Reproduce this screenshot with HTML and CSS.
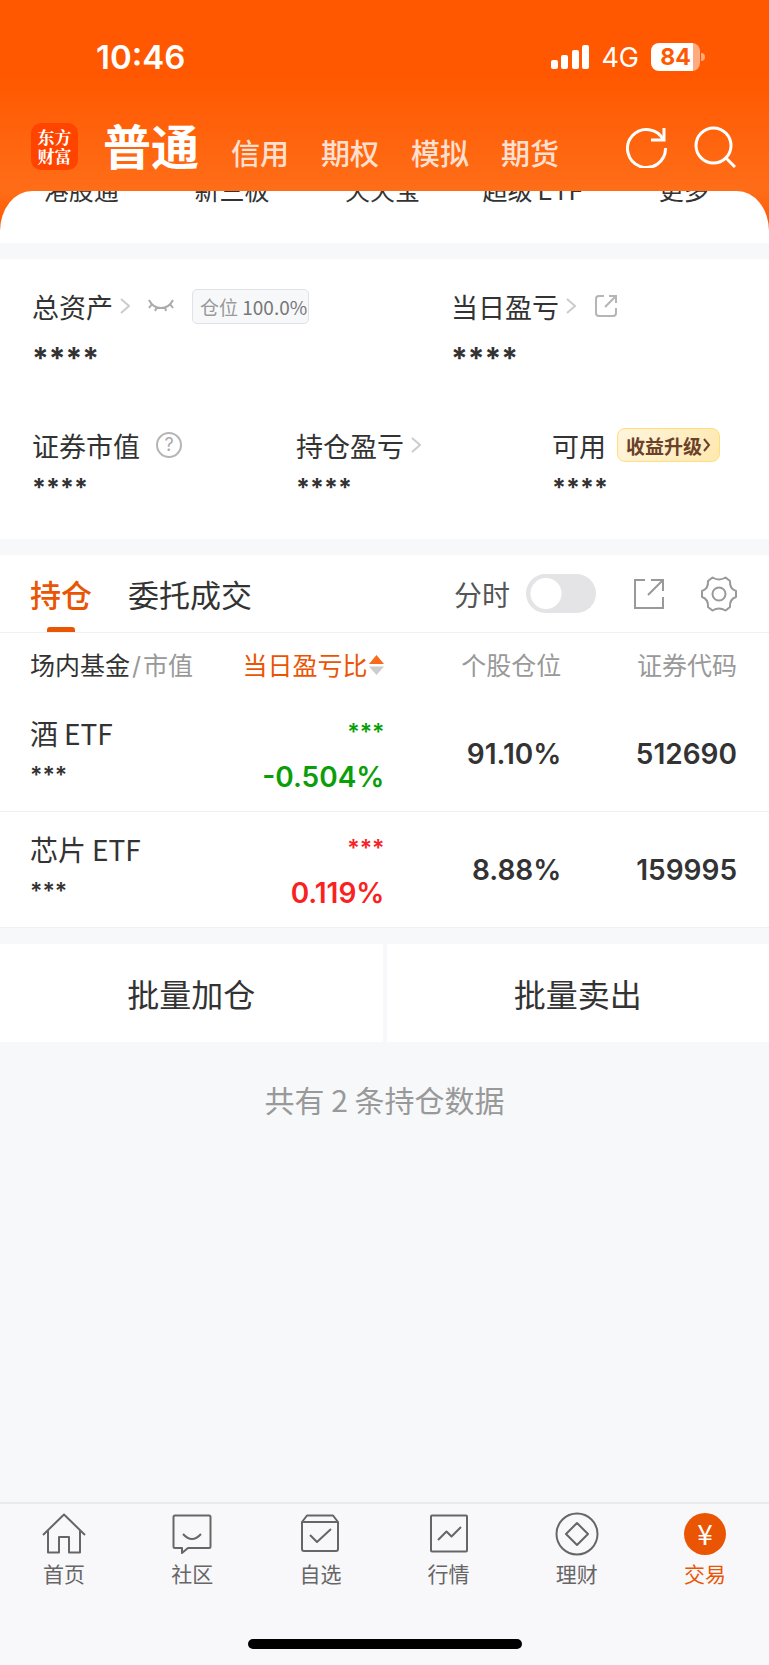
FILE: index.html
```html
<!DOCTYPE html>
<html lang="zh-CN">
<head>
    <meta charset="utf-8">
    <meta name="viewport" content="width=device-width, initial-scale=1">
    <title>交易 - 持仓</title>
    <link rel="stylesheet" href="styles.css">
</head>
<body>

<header class="top">
    <div class="status-bar">
        <span class="clock">10:46</span>
        <div class="status-icons">
            <svg class="signal" width="38" height="25" viewBox="0 0 38 25" fill="#fff">
                <rect x="0" y="15" width="7" height="9" rx="2"/>
                <rect x="10" y="10" width="7" height="14" rx="2"/>
                <rect x="21" y="5" width="7" height="19" rx="2"/>
                <rect x="31" y="0" width="7" height="24" rx="2"/>
            </svg>
            <span class="network">4G</span>
            <span class="battery">84</span>
        </div>
    </div>

    <div class="nav-bar">
        <div class="logo">东方<br>财富</div>
        <nav class="accounts">
            <a href="#" class="active">普通</a>
            <a href="#">信用</a>
            <a href="#">期权</a>
            <a href="#">模拟</a>
            <a href="#">期货</a>
        </nav>
        <div class="nav-actions">
            <button type="button" aria-label="刷新">
                <svg width="42" height="42" viewBox="0 0 42 42" fill="none" stroke="#fff" stroke-width="3">
                    <path d="M40.500 22A19 19 0 1 1 38.500 14"/>
                    <path d="M39 2V14H26"/>
                </svg>
            </button>
            <button type="button" aria-label="搜索">
                <svg width="42" height="42" viewBox="0 0 42 42" fill="none" stroke="#fff" stroke-width="3">
                    <circle cx="19.500" cy="19.500" r="17.500"/>
                    <path d="M32 32L41 41"/>
                </svg>
            </button>
        </div>
    </div>

    <div class="sheet">
        <a href="#">港股通</a>
        <a href="#">新三板</a>
        <a href="#">天天宝</a>
        <a href="#">超级<span>ETF</span></a>
        <a href="#">更多</a>
    </div>
</header>

<section class="assets">
    <div class="asset-row main-row">
        <div>
            <div class="label">
                <span>总资产</span>
                <svg class="chevron" width="10" height="16" viewBox="0 0 10 16"><path d="M1 1L9 8L1 15"/></svg>
                <button type="button" class="eye" aria-label="显示金额">
                    <svg width="26" height="14" viewBox="0 0 26 14" fill="none" stroke="#aaa" stroke-width="2">
                        <path d="M1 1Q5 9 13 9T25 1M4 5L1 9M9 8L7 12M17 8L18 12M22 5L25 9"/>
                    </svg>
                </button>
                <span class="ratio">仓位 <b>100.0%</b></span>
            </div>
            <div class="mask">****</div>
        </div>
        <div>
            <div class="label">
                <span>当日盈亏</span>
                <svg class="chevron" width="10" height="16" viewBox="0 0 10 16"><path d="M1 1L9 8L1 15"/></svg>
                <button type="button" class="share" aria-label="分享">
                    <svg width="24" height="24" viewBox="0 0 24 24" fill="none" stroke="#b5b5b5" stroke-width="2">
                        <path d="M10 2H5Q2 2 2 5V19Q2 22 5 22H19Q22 22 22 19V14M15 2H22V9M22 2L11 13"/>
                    </svg>
                </button>
            </div>
            <div class="mask">****</div>
        </div>
    </div>

    <div class="asset-row sub-row">
        <div>
            <div class="label">
                <span>证券市值</span>
                <button type="button" class="help" aria-label="说明">?</button>
            </div>
            <div class="mask">****</div>
        </div>
        <div>
            <div class="label">
                <span>持仓盈亏</span>
                <svg class="chevron" width="10" height="16" viewBox="0 0 10 16"><path d="M1 1L9 8L1 15"/></svg>
            </div>
            <div class="mask">****</div>
        </div>
        <div>
            <div class="label">
                <span>可用</span>
                <a href="#" class="upgrade">收益升级<svg width="8" height="14" viewBox="0 0 8 14"><path d="M1 1L6 7L1 13"/></svg></a>
            </div>
            <div class="mask">****</div>
        </div>
    </div>
</section>

<section class="holdings">
    <div class="tabs">
        <button type="button" class="tab active">持仓</button>
        <button type="button" class="tab">委托成交</button>
        <label for="minute">分时</label>
        <input type="checkbox" id="minute" class="switch">
        <button type="button" aria-label="分享">
            <svg width="32" height="32" viewBox="0 0 32 32" fill="none" stroke="#999" stroke-width="2">
                <path d="M12 2H2V30H30V19M18 2H30V13M30 2L15 17"/>
            </svg>
        </button>
        <button type="button" class="gear" aria-label="设置">
            <svg width="36" height="36" viewBox="0 0 36 36" fill="none" stroke="#999" stroke-width="2" stroke-linejoin="round">
                <path d="M11.500 1.500Q18 5.500 24.500 1.500L29 5Q28.500 13 35 15V21Q28.500 23 29 31L24.500 34.500Q18 30.500 11.500 34.500L7 31Q7.500 23 1 21V15Q7.500 13 7 5Z"/>
                <circle cx="18" cy="18" r="6.500"/>
            </svg>
        </button>
    </div>

    <table>
        <thead>
            <tr>
                <th class="name">场内基金<span><i>/</i>市值</span></th>
                <th class="sorted">当日盈亏比<svg width="15" height="20" viewBox="0 0 15 20"><path d="M0 9L7.500 0L15 9Z" fill="#f96a1b"/><path d="M0 11.500H15L7.500 20Z" fill="#ccc"/></svg></th>
                <th>个股仓位</th>
                <th class="code">证券代码</th>
            </tr>
        </thead>
        <tbody>
            <tr>
                <td class="name">酒<span>ETF</span><div class="mask">***</div></td>
                <td class="change down"><div class="mask">***</div>-0.504%</td>
                <td>91.10%</td>
                <td class="code">512690</td>
            </tr>
            <tr>
                <td class="name">芯片<span>ETF</span><div class="mask">***</div></td>
                <td class="change up"><div class="mask">***</div>0.119%</td>
                <td>8.88%</td>
                <td class="code">159995</td>
            </tr>
        </tbody>
    </table>
</section>

<div class="batch">
    <button type="button">批量加仓</button>
    <button type="button">批量卖出</button>
</div>

<p class="summary">共有 2 条持仓数据</p>

<footer>
    <nav class="tab-bar">
        <a href="#">
            <svg width="44" height="44" viewBox="0 0 44 44">
                <path d="M1 23L22 2.500L43 23M6 18V40.500H17V25H27V40.500H38V18"/>
            </svg>
            首页
        </a>
        <a href="#">
            <svg width="44" height="44" viewBox="0 0 44 44">
                <path d="M5 3.500H39Q40.500 3.500 40.500 5V34.500Q40.500 36 39 36H18L12 41V36H5Q3.500 36 3.500 34.500V5Q3.500 3.500 5 3.500Z"/>
                <path d="M13 22Q22 32 31 22"/>
            </svg>
            社区
        </a>
        <a href="#">
            <svg width="44" height="44" viewBox="0 0 44 44">
                <path d="M4 10L9 3.500H35L40 10V37Q40 39 38 39H6Q4 39 4 37ZM4 10H40M12 23L19 30L33 17"/>
            </svg>
            自选
        </a>
        <a href="#">
            <svg width="44" height="44" viewBox="0 0 44 44">
                <rect x="4" y="3.500" width="36" height="36" rx="1"/>
                <path d="M11 28L19.500 19.500L24.500 24.500L34 15"/>
            </svg>
            行情
        </a>
        <a href="#">
            <svg width="44" height="44" viewBox="0 0 44 44">
                <circle cx="22" cy="22" r="20.500"/>
                <path d="M22 11L33 22L22 33L11 22Z"/>
            </svg>
            理财
        </a>
        <a href="#" class="active">
            <span class="yen">¥</span>
            交易
        </a>
    </nav>
    <div class="home-indicator"></div>
</footer>

</body>
</html>
```

FILE: styles.css
```css
* {
  box-sizing: border-box;
}

body {
  margin: 0;
  min-height: 100vh;
  display: flex;
  flex-direction: column;
  background-color: #f7f8fa;
  color: #333;
  font-family: Inter, "Noto Sans CJK SC", sans-serif;
  font-size: 27px;
}

a {
  color: inherit;
  text-decoration: none;
}

button {
  display: flex;
  padding: 0;
  border: 0;
  background: none;
  color: inherit;
  font: inherit;
}

svg {
  display: block;
  flex: none;
}

/* header */

.top {
  background: linear-gradient(#ff5800 75px, #ff6d18 190px, #ff5800 230px);
  color: #fff;
}

.status-bar {
  display: flex;
  justify-content: space-between;
  align-items: center;
  height: 114px;
  padding: 0 63px 0 96px;
}

.clock {
  font-size: 33px;
  font-weight: 600;
}

.status-icons {
  display: flex;
  align-items: center;
}

.network {
  margin: 0 12px;
  font-size: 27px;
}

.battery {
  position: relative;
  width: 49px;
  height: 28px;
  margin-right: 6px;
  border-radius: 8px;
  background: linear-gradient(90deg, #fff 42px, #ffab80 42px);
  color: #ff5800;
  font-size: 23px;
  font-weight: 700;
  line-height: 28px;
  text-align: center;
}

.battery::after {
  content: "";
  position: absolute;
  right: -5px;
  top: 10px;
  width: 4px;
  height: 8px;
  border-radius: 0 4px 4px 0;
  background-color: #ffab80;
}

.nav-bar {
  display: flex;
  align-items: center;
  height: 77px;
  padding: 0 33px 12px 31px;
}

.logo {
  width: 47px;
  height: 47px;
  padding-top: 4px;
  border-radius: 10px;
  background-color: #ff4400;
  font-family: "Noto Serif CJK SC", "Noto Sans CJK SC", serif;
  font-size: 17px;
  font-weight: 700;
  line-height: 19px;
  text-align: center;
}

.accounts {
  display: flex;
  align-items: baseline;
  gap: 32px;
  margin-left: 25px;
  padding-top: 9px;
  color: #ffe0d0;
  font-size: 29px;
  font-weight: 500;
  line-height: 64px;
}

.accounts .active {
  color: #fff;
  font-size: 48px;
  font-weight: 700;
}

.nav-actions {
  display: flex;
  gap: 27px;
  margin-left: auto;
}

.sheet {
  display: grid;
  grid-template-columns: repeat(5, 1fr);
  align-items: start;
  height: 52px;
  padding: 0 10px 0 6px;
  overflow: hidden;
  border-radius: 32px 32px 0 0 / 40px 40px 0 0;
  background-color: #fff;
  color: #333;
  font-size: 25px;
  line-height: 36px;
  text-align: center;
}

/* scrolled half way under the header */
.sheet a {
  margin-top: -18px;
}

.sheet span {
  margin-left: 5px;
}

/* assets */

.assets {
  margin: 16px 0;
  padding: 28px 0 27px 32px;
  background-color: #fff;
}

.asset-row {
  display: grid;
}

.main-row {
  grid-template-columns: 419fr 318fr;
  margin-bottom: 41px;
}

.sub-row {
  grid-template-columns: 264fr 256fr 217fr;
}

.label {
  display: flex;
  align-items: center;
  height: 38px;
}

.mask {
  font-weight: 700;
}

.main-row .mask {
  padding-top: 6px;
  font-size: 30px;
  line-height: 54px;
}

.sub-row .mask {
  font-size: 25px;
  line-height: 48px;
}

.chevron {
  margin-left: 7px;
  fill: none;
  stroke: #ccc;
  stroke-width: 2px;
}

.eye {
  margin-left: 18px;
}

.ratio {
  margin-left: 18px;
  padding: 0 1px 0 7px;
  border: 1px solid #e1e2e5;
  border-radius: 5px;
  background-color: #f7f8fa;
  color: #999;
  font-family: "Noto Sans CJK SC", sans-serif;
  font-size: 19px;
  line-height: 33px;
  white-space: nowrap;
}

.ratio b {
  color: #777;
  font-weight: 400;
}

.share {
  margin-left: 18px;
}

.help {
  justify-content: center;
  width: 26px;
  height: 26px;
  margin-left: 16px;
  border: 2px solid #b5b5b5;
  border-radius: 50%;
  color: #aaa;
  font-size: 18px;
  line-height: 22px;
}

.upgrade {
  display: flex;
  align-items: center;
  gap: 1px;
  height: 34px;
  margin-left: 11px;
  padding: 0 8px;
  border: 1px solid #ffe078;
  border-radius: 8px;
  background: linear-gradient(120deg, #fff5de, #ffe8b0);
  color: #6b4128;
  font-size: 19px;
  font-weight: 700;
}

.upgrade svg {
  fill: none;
  stroke: #6b4128;
  stroke-width: 2px;
}

/* holdings */

.holdings {
  background-color: #fff;
}

.tabs {
  display: flex;
  align-items: center;
  height: 78px;
  padding: 0 32px 0 30px;
  border-bottom: 1px solid #f0f0f2;
}

.tab {
  position: relative;
  height: 77px;
  margin-right: 36px;
  align-items: center;
  font-size: 31px;
}

.tab.active {
  color: #ea5504;
  font-weight: 500;
}

.tab.active::after {
  content: "";
  position: absolute;
  left: 17px;
  bottom: 0;
  width: 28px;
  height: 5px;
  border-radius: 3px 3px 0 0;
  background-color: #ea5504;
}

.tabs label {
  margin-left: auto;
  color: #555;
  font-size: 28px;
}

.switch {
  appearance: none;
  width: 70px;
  height: 39px;
  margin: 0 37px 0 16px;
  border-radius: 20px;
  background: radial-gradient(circle at 20px 50%, #fff 15px, #e4e4e6 16px);
}

.gear {
  margin-left: 36px;
}

table {
  width: 100%;
  table-layout: fixed;
  border-collapse: collapse;
}

th,
td {
  padding: 0;
  text-align: right;
}

th {
  height: 62px;
  color: #999;
  font-size: 25px;
  font-weight: 400;
}

td {
  height: 116px;
  padding-top: 2px;
  border-bottom: 1px solid #f0f0f2;
  font-size: 28px;
  font-weight: 600;
}

.name {
  width: 27%;
  padding-left: 30px;
  text-align: left;
  white-space: nowrap;
}

.sorted {
  width: 23%;
  color: #ea5504;
}

.code {
  width: 27%;
  padding-right: 32px;
}

th.name {
  color: #333;
}

th.name span {
  color: #999;
}

th.name i {
  margin: 0 2px;
  font-style: normal;
}

.sorted svg {
  display: inline-block;
  margin-left: 2px;
}

td.name {
  font-family: "Noto Sans CJK SC", sans-serif;
  font-size: 28px;
  font-weight: 400;
  line-height: 42px;
}

td.name span {
  margin-left: 6px;
}

td .mask {
  font-family: Inter, sans-serif;
  font-size: 23px;
  font-weight: 600;
}

td.change {
  padding-top: 4px;
  line-height: 45px;
}

.down {
  color: #0a9f0a;
}

.up {
  color: #f92222;
}

/* batch buttons */

.batch {
  display: grid;
  grid-template-columns: 1fr 1fr;
  gap: 4px;
  margin-top: 16px;
}

.batch button {
  justify-content: center;
  align-items: center;
  height: 98px;
  background-color: #fff;
  font-size: 32px;
}

.summary {
  margin: 35px 0;
  color: #999;
  font-family: "Noto Sans CJK SC", sans-serif;
  font-size: 30px;
  line-height: 44px;
  text-align: center;
}

/* bottom bar */

footer {
  margin-top: auto;
  padding-bottom: 16px;
  border-top: 2px solid #e9eaec;
  background-color: #f8f8fb;
}

.tab-bar {
  display: grid;
  grid-template-columns: repeat(6, 1fr);
  height: 135px;
  padding-top: 8px;
  color: #666;
  font-size: 21px;
  line-height: 38px;
}

.tab-bar a {
  display: flex;
  flex-direction: column;
  align-items: center;
}

.tab-bar .active {
  color: #ea5504;
}

.tab-bar svg {
  fill: none;
  stroke: #666;
  stroke-width: 2px;
  stroke-linejoin: round;
}

.yen {
  width: 42px;
  height: 42px;
  margin: 1px;
  border-radius: 50%;
  background-color: #ea5504;
  color: #fff;
  font-family: "Noto Sans CJK SC", sans-serif;
  font-size: 28px;
  line-height: 41px;
  text-align: center;
}

.home-indicator {
  width: 274px;
  height: 10px;
  margin: 0 auto;
  border-radius: 5px;
  background-color: #000;
}
```
